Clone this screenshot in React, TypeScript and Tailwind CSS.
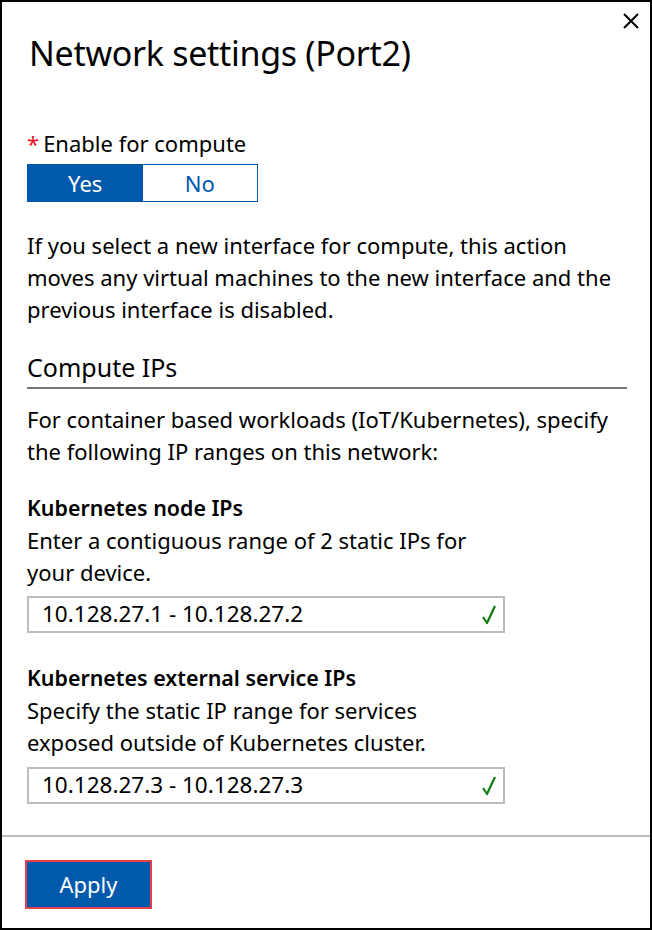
import React from 'react'

const font = { fontFamily: '"Noto Sans", "Open Sans", Arial, sans-serif' }

function Check() {
  return (
    <svg width="16" height="22" viewBox="0 0 16 22" className="shrink-0">
      <path d="M2 13 L6 19 L14 2" fill="none" stroke="#107c10" strokeWidth="2.2" strokeLinejoin="round" />
    </svg>
  )
}

function IpInput({ value }: { value: string }) {
  return (
    <div className="flex h-[37px] w-[478px] items-center justify-between border-2 border-[#bdbdbd] pl-[13px] pr-[6px]">
      <span className="text-[22.5px] leading-none text-black">{value}</span>
      <Check />
    </div>
  )
}

export default function App() {
  return (
    <div style={font} className="relative flex h-[930px] w-[652px] flex-col border-2 border-black bg-white text-black">
      {/* close */}
      <button className="absolute right-[8px] top-[8px] p-[2px]">
        <svg width="18" height="18" viewBox="0 0 18 18">
          <path d="M2 2 L16 16 M16 2 L2 16" stroke="#000" strokeWidth="2" />
        </svg>
      </button>

      <div className="px-[25px]">
        <h1 className="ml-[2px] mt-[31px] text-[34px] leading-[40px] font-normal tracking-[-0.3px]">Network settings (Port2)</h1>

        <div className="mt-[54px] text-[22px] leading-[32px]">
          <span className="mr-[4px] text-[#e81123]">*</span>Enable for compute
        </div>
        <div className="mt-[5px] flex h-[38px] w-[231px] border border-[#0059ab] text-[22px]">
          <div className="flex flex-1 items-center justify-center bg-[#0059ab] text-white">Yes</div>
          <div className="flex flex-1 items-center justify-center bg-white text-[#0059ab]">No</div>
        </div>

        <p className="mt-[27px] text-[22px] leading-[32px]">
          If you select a new interface for compute, this action moves any virtual machines to the new interface and the previous interface is disabled.
        </p>

        <h2 className="mt-[26px] border-b-2 border-[#767676] pb-[4px] text-[25px] leading-[32px] font-normal mr-[-2px]">Compute IPs</h2>

        <p className="mt-[14px] text-[22px] leading-[32px]">
          For container based workloads (IoT/Kubernetes), specify the following IP ranges on this network:
        </p>

        <div className="mt-[25px] text-[21.4px] leading-[32px] font-semibold">Kubernetes node IPs</div>
        <p className="w-[478px] text-[22px] leading-[32px]">Enter a contiguous range of 2 static IPs for your device.</p>
        <div className="mt-[8px]">
          <IpInput value="10.128.27.1 - 10.128.27.2" />
        </div>

        <div className="mt-[29px] text-[21.4px] leading-[32px] font-semibold">Kubernetes external service IPs</div>
        <p className="w-[478px] text-[22px] leading-[32px]">Specify the static IP range for services exposed outside of Kubernetes cluster.</p>
        <div className="mt-[9px]">
          <IpInput value="10.128.27.3 - 10.128.27.3" />
        </div>
      </div>

      <div className="flex-1" />
      <div className="h-[2px] bg-[#bdbdbd]" />
      <div className="px-[23px] pt-[23px] pb-[19px]">
        <button className="h-[49px] w-[127px] border-2 border-[#e8404a] bg-[#0059ab] text-[22px] text-white">Apply</button>
      </div>
    </div>
  )
}
